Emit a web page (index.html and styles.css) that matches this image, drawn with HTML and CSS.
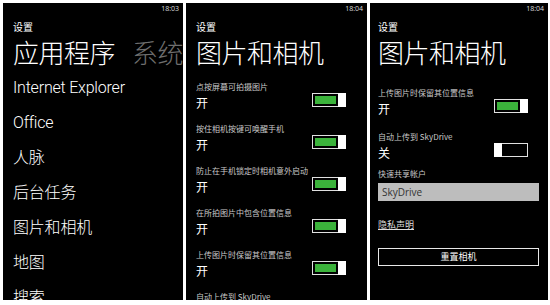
FILE: index.html
```html
<!DOCTYPE html>
<html lang="zh">
<head>
<meta charset="utf-8">
<link rel="stylesheet" href="styles.css">
</head>
<body>
<div class="shots">
  <section class="panel p1">
    <div class="status">18:03</div>
    <div class="crumb">设置</div>
    <h1 class="title">应用程序<span class="next">系统</span></h1>
    <ul class="list">
      <li>Internet Explorer</li>
      <li>Office</li>
      <li>人脉</li>
      <li>后台任务</li>
      <li>图片和相机</li>
      <li>地图</li>
      <li>搜索</li>
    </ul>
  </section>

  <section class="panel p2">
    <div class="status">18:04</div>
    <div class="crumb">设置</div>
    <h1 class="title">图片和相机</h1>
    <div class="settings">
      <div class="setting">
        <div class="label">点按屏幕可拍摄图片</div>
        <div class="row"><span class="value">开</span><span class="toggle on"><span class="fill"></span><span class="thumb"></span></span></div>
      </div>
      <div class="setting">
        <div class="label">按住相机按键可唤醒手机</div>
        <div class="row"><span class="value">开</span><span class="toggle on"><span class="fill"></span><span class="thumb"></span></span></div>
      </div>
      <div class="setting">
        <div class="label">防止在手机锁定时相机意外启动</div>
        <div class="row"><span class="value">开</span><span class="toggle on"><span class="fill"></span><span class="thumb"></span></span></div>
      </div>
      <div class="setting">
        <div class="label">在所拍图片中包含位置信息</div>
        <div class="row"><span class="value">开</span><span class="toggle on"><span class="fill"></span><span class="thumb"></span></span></div>
      </div>
      <div class="setting">
        <div class="label">上传图片时保留其位置信息</div>
        <div class="row"><span class="value">开</span><span class="toggle on"><span class="fill"></span><span class="thumb"></span></span></div>
      </div>
      <div class="setting">
        <div class="label">自动上传到 SkyDrive</div>
        <div class="row"><span class="value">关</span><span class="toggle off"><span class="thumb"></span><span class="fill"></span></span></div>
      </div>
    </div>
  </section>

  <section class="panel p3">
    <div class="status">18:04</div>
    <div class="crumb">设置</div>
    <h1 class="title">图片和相机</h1>
    <div class="settings s3">
      <div class="setting">
        <div class="label">上传图片时保留其位置信息</div>
        <div class="row"><span class="value">开</span><span class="toggle on"><span class="fill"></span><span class="thumb"></span></span></div>
      </div>
      <div class="setting">
        <div class="label">自动上传到 SkyDrive</div>
        <div class="row"><span class="value">关</span><span class="toggle off"><span class="thumb"></span><span class="fill"></span></span></div>
      </div>
      <div class="label account">快速共享帐户</div>
      <div class="select">SkyDrive</div>
      <a class="link">隐私声明</a>
      <div class="button">重置相机</div>
    </div>
  </section>
</div>
</body>
</html>
```

FILE: styles.css
```css
* { box-sizing: border-box; margin: 0; padding: 0; }
html, body { background: #fff; }
body {
  width: 550px;
  height: 305px;
  overflow: hidden;
  font-family: "Open Sans", "Noto Sans CJK SC", sans-serif;
  color: #fff;
}
.shots {
  display: flex;
  gap: 3px;
  padding: 3px 2px 0 3px;
}
.panel {
  background: #000;
  height: 297px;
  overflow: hidden;
  padding-left: 10px;
  white-space: nowrap;
}
.p1 { width: 180px; }
.p2 { width: 181px; }
.p3 { width: 178px; padding-left: 8px; }

.status {
  height: 12px;
  padding-top: 1px;
  padding-right: 4px;
  text-align: right;
  font-size: 7px;
  line-height: 10px;
  color: #ddd;
}
.crumb {
  margin-top: 6px;
  font-size: 10px;
  line-height: 12px;
  font-family: "Noto Sans CJK SC", sans-serif;
}
.title {
  margin-top: 4px;
  font-size: 26px;
  line-height: 30px;
  font-weight: 200;
  font-family: "Noto Sans CJK SC", sans-serif;
  letter-spacing: -0.5px;
}
.title .next { color: #6e6e6e; margin-left: 17px; }

.list { list-style: none; margin-top: 3px; }
.list li {
  height: 35px;
  line-height: 35px;
  font-size: 16px;
  font-weight: 300;
  letter-spacing: -0.2px;
  font-family: "Roboto", "Noto Sans CJK SC", sans-serif;
}

.settings { margin-top: 15px; padding-right: 21px; }
.setting { height: 42px; }
.label {
  font-size: 8px;
  line-height: 10px;
  color: #c8c8c8;
  font-family: "Noto Sans CJK SC", sans-serif;
}
.row {
  display: flex;
  justify-content: space-between;
  align-items: center;
  height: 16px;
  margin-top: 1px;
}
.value {
  font-size: 12px;
  line-height: 16px;
  font-family: "Noto Sans CJK SC", sans-serif;
  padding-top: 3px;
}
.toggle {
  display: flex;
  align-items: stretch;
  width: 34px;
  height: 14px;
  margin-top: -2px;
}
.toggle .fill {
  flex: 1;
  border: 1px solid #e0e0e0;
  background: #000;
}
.toggle.on .fill {
  border-right: none;
  background: #3bb33b;
  box-shadow: inset 0 0 0 2px #000;
}
.toggle.off .fill { border-left: none; }
.toggle .thumb {
  width: 8px;
  background: #fff;
}

.s3 { margin-top: 21px; padding-right: 20px; }
.s3 .setting { height: 44px; }
.account { margin-top: -7px; }
.select {
  margin-top: 4px;
  height: 18px;
  width: 161px;
  background: #bdbdbd;
  color: #333;
  font-size: 10px;
  line-height: 18px;
  padding-left: 4px;
  font-family: "Open Sans", sans-serif;
}
.link {
  display: inline-block;
  margin-top: 18px;
  font-size: 9px;
  line-height: 12px;
  color: #ddd;
  text-decoration: underline;
  font-family: "Noto Sans CJK SC", sans-serif;
}
.button {
  margin-top: 15px;
  width: 161px;
  height: 18px;
  border: 1.5px solid #e8e8e8;
  text-align: center;
  font-size: 9px;
  line-height: 15px;
  font-family: "Noto Sans CJK SC", sans-serif;
}
```
